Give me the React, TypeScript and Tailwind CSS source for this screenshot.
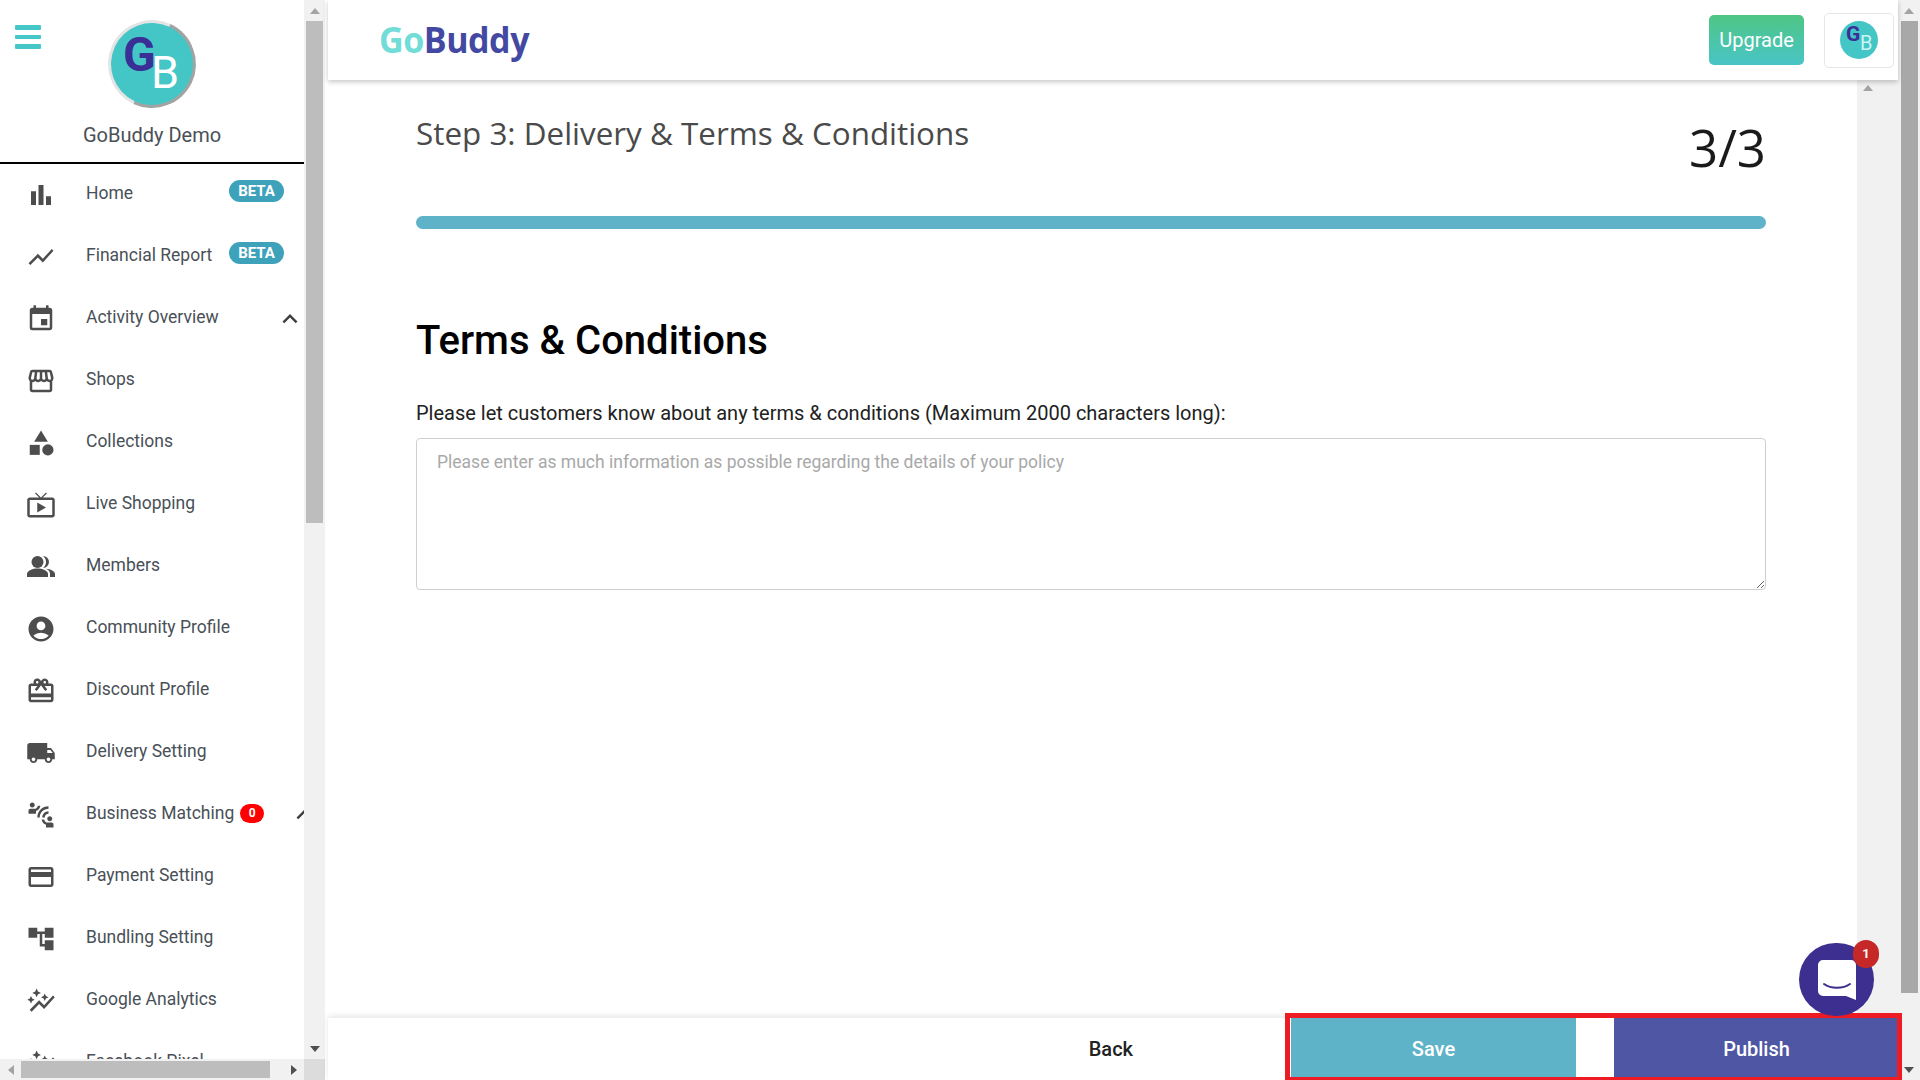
import React from 'react';
import {
  MdBarChart, MdShowChart, MdEvent, MdOutlineStorefront, MdCategory, MdOutlineLiveTv,
  MdAccountCircle, MdOutlineRedeem, MdLocalShipping, MdConnectWithoutContact, MdOutlineCreditCard,
  MdAccountTree, MdAutoGraph, MdExpandLess,
} from 'react-icons/md';

const PeopleIcon = ({ size, className }: { size: number; className?: string }) => (
  <svg viewBox="0 2 30 30" width={size} height={size} className={className} fill="currentColor">
    <circle cx="11.5" cy="12" r="6" />
    <path d="M17 6a6 6 0 0 1 0 12c2-1.600 3-3.600 3-6s-1-4.400-3-6z" />
    <path d="M1 27v-3c0-3.500 6-5.500 10.500-5.500S22 20.500 22 24v3z" />
    <path d="M20 18.700c4.500.4 9 2.300 9 5.300v3h-5v-3.400c0-2.100-1.500-3.800-4-4.900z" />
  </svg>
);

const menu = [
  { label: 'Home', icon: MdBarChart, beta: true },
  { label: 'Financial Report', icon: MdShowChart, beta: true },
  { label: 'Activity Overview', icon: MdEvent, chevron: true },
  { label: 'Shops', icon: MdOutlineStorefront },
  { label: 'Collections', icon: MdCategory },
  { label: 'Live Shopping', icon: MdOutlineLiveTv },
  { label: 'Members', icon: PeopleIcon },
  { label: 'Community Profile', icon: MdAccountCircle },
  { label: 'Discount Profile', icon: MdOutlineRedeem },
  { label: 'Delivery Setting', icon: MdLocalShipping },
  { label: 'Business Matching', icon: MdConnectWithoutContact, count: 0 },
  { label: 'Payment Setting', icon: MdOutlineCreditCard },
  { label: 'Bundling Setting', icon: MdAccountTree },
  { label: 'Google Analytics', icon: MdAutoGraph },
  { label: 'Facebook Pixel', icon: MdAutoGraph },
];

const Arrow = ({ dir, className }: { dir: 'up' | 'down' | 'left' | 'right'; className: string }) => {
  const points = { up: '0,8 5,2 10,8', down: '0,2 5,8 10,2', left: '8,0 2,5 8,10', right: '2,0 8,5 2,10' }[dir];
  return (
    <svg viewBox="0 0 10 10" className={`w-[10px] h-[10px] ${className}`}>
      <polygon points={points} />
    </svg>
  );
};

const Avatar = ({ big }: { big?: boolean }) =>
  big ? (
    <div className="w-[88px] h-[88px] rounded-full border-[3px] border-t-[#e4e4e4] border-l-[#e4e4e4] border-r-[#a3a3a3] border-b-[#a3a3a3] rotate-[-20deg] bg-[#45c6c6] relative overflow-hidden shrink-0">
      <div className="absolute inset-0 rotate-[20deg]">
        <span className="absolute left-[12px] top-[4px] text-[48px] leading-[56px] font-bold text-[#3a2f96]">G</span>
        <span className="absolute left-[40px] top-[23px] text-[45px] leading-[54px] text-white">B</span>
      </div>
    </div>
  ) : (
    <div className="w-[38px] h-[38px] rounded-full bg-[#45c6c6] relative overflow-hidden shrink-0">
      <span className="absolute left-[6px] top-[1px] text-[21px] leading-[24px] font-bold text-[#3a2f96]">G</span>
      <span className="absolute left-[20px] top-[10px] text-[20px] leading-[24px] text-[#c9f4f4]">B</span>
    </div>
  );

const Sidebar = () => (
  <aside className="w-[325px] shrink-0 flex flex-col bg-white">
    <div className="flex flex-1 min-h-0">
      <div className="w-[304px] shrink-0 overflow-hidden">
        <div className="relative h-[164px] border-b-2 border-black flex flex-col items-center pt-[20px]">
          <div className="absolute left-[15px] top-[25px] w-[26px] flex flex-col gap-[5px]">
            <div className="h-[4.5px] rounded-[1px] bg-[#45c7c7]" />
            <div className="h-[4.5px] rounded-[1px] bg-[#45c7c7]" />
            <div className="h-[4.5px] rounded-[1px] bg-[#45c7c7]" />
          </div>
          <Avatar big />
          <div className="mt-[14px] text-[20px] leading-[26px] text-[#495057]">GoBuddy Demo</div>
        </div>
        <nav className="-mt-[2px]">
          {menu.map(item => (
            <div key={item.label} className="h-[62px] flex items-center whitespace-nowrap text-[17.5px] text-[#495057]">
              <div className="w-[86px] pl-[26px] pt-[4px] shrink-0">
                <item.icon size={30} className="text-[#4d4d4d]" />
              </div>
              <span className="shrink-0">{item.label}</span>
              {item.beta && (
                <span className="ml-auto mr-[20px] mb-[4px] w-[55px] h-[22px] shrink-0 rounded-full bg-[#3fa2bb] text-white text-[15px] font-bold flex items-center justify-center">BETA</span>
              )}
              {item.chevron && (
                <MdExpandLess size={30} className="ml-[56px] mt-[4px] shrink-0 text-[#3f3f3f]" />
              )}
              {item.count !== undefined && (
                <>
                  <span className="ml-[6px] w-[24px] h-[19px] shrink-0 rounded-full bg-[#f00] text-white text-[12px] font-bold flex items-center justify-center">{item.count}</span>
                  <MdExpandLess size={30} className="ml-[25px] mt-[4px] shrink-0 text-[#3f3f3f]" />
                </>
              )}
            </div>
          ))}
        </nav>
      </div>
      <div className="w-[21px] shrink-0 bg-[#f1f1f1] flex flex-col items-center">
        <div className="h-[21px] flex items-center justify-center"><Arrow dir="up" className="fill-[#a3a3a3]" /></div>
        <div className="w-[17px] h-[502px] bg-[#bdbdbd]" />
        <div className="mt-auto h-[21px] flex items-center justify-center"><Arrow dir="down" className="fill-[#505050]" /></div>
      </div>
    </div>
    <div className="h-[21px] shrink-0 bg-[#f1f1f1] flex items-center">
      <div className="w-[21px] flex justify-center"><Arrow dir="left" className="fill-[#a3a3a3]" /></div>
      <div className="w-[249px] h-[17px] bg-[#bdbdbd]" />
      <div className="w-[34px] flex justify-end pr-[5px]"><Arrow dir="right" className="fill-[#505050]" /></div>
      <div className="w-[21px] h-full bg-[#dcdcdc]" />
    </div>
  </aside>
);

const Header = () => (
  <header className="relative z-10 h-[80px] shrink-0 bg-white shadow-[0_2px_5px_rgba(0,0,0,0.22)] flex items-center pl-[51px] pr-[4px]">
    <div className="text-[36px] font-bold leading-none tracking-[-0.5px] [font-family:'Open_Sans',sans-serif] scale-x-[0.945] origin-left">
      <span className="text-[#72dcd6]">Go</span>
      <span className="text-[#4349a3]">Buddy</span>
    </div>
    <button className="ml-auto w-[95px] h-[50px] rounded-[5px] bg-gradient-to-b from-[#4fc583] to-[#49c4c6] text-white text-[20px]">Upgrade</button>
    <div className="ml-[20px] w-[70px] h-[55px] rounded-[5px] border border-[#e6e6e6] flex items-center justify-center">
      <Avatar />
    </div>
  </header>
);

const Content = () => (
  <div className="flex-1 min-h-0 flex">
    <div className="flex-1 pl-[88px] pr-[91px]">
      <div className="flex justify-between items-start h-[136px]">
        <h2 className="mt-[29px] text-[31.4px] leading-[48px] text-[#4a4a4a] [font-family:'Open_Sans',sans-serif]">Step 3: Delivery &amp; Terms &amp; Conditions</h2>
        <div className="mt-[33px] text-[51px] leading-[68px] text-[#1a1a1a] [font-family:'Open_Sans',sans-serif]">3/3</div>
      </div>
      <div className="h-[13px] rounded-full bg-[#5fb3c9]" />
      <h1 className="mt-[87px] text-[40px] leading-[50px] font-medium text-black">Terms &amp; Conditions</h1>
      <label className="block mt-[32px] text-[20px] leading-[30px] text-[#212121]">Please let customers know about any terms &amp; conditions (Maximum 2000 characters long):</label>
      <textarea
        readOnly
        placeholder="Please enter as much information as possible regarding the details of your policy"
        className="block mt-[10px] w-full h-[152px] rounded-[4px] border border-[#cfcfcf] px-[20px] py-[10px] text-[17.5px] leading-[26px] placeholder:text-[#a8a8a8] outline-none"
      />
    </div>
    <div className="w-[41px] shrink-0 bg-[#f1f1f1] pl-[5px]">
      <Arrow dir="up" className="ml-[1px] mt-[3px] fill-[#a3a3a3]" />
    </div>
  </div>
);

const Footer = () => (
  <footer className="relative h-[62px] shrink-0 bg-white shadow-[0_-2px_6px_rgba(0,0,0,0.1)] flex items-stretch text-[20px] font-medium">
    <div className="flex-1 flex items-center justify-end text-[#212121] pr-[158px]">Back</div>
    <div className="w-[285px] mb-[3px] pt-[2px] bg-[#5fb3c9] text-white flex items-center justify-center">Save</div>
    <div className="w-[38px]" />
    <div className="w-[283px] mb-[3px] pt-[2px] pl-[2px] bg-[#4f56a4] text-white flex items-center justify-center">Publish</div>
    <div className="w-[1px]" />
  </footer>
);

const App: React.FC = () => (
  <div className="relative h-screen w-screen overflow-hidden flex bg-white font-['Roboto',sans-serif]">
    <Sidebar />
    <main className="flex-1 min-w-0 flex flex-col pl-[3px]">
      <Header />
      <Content />
      <Footer />
    </main>
    <div className="w-[22px] shrink-0 bg-[#f1f1f1] flex flex-col items-center">
      <div className="h-[21px] flex items-center justify-center"><Arrow dir="up" className="fill-[#a3a3a3]" /></div>
      <div className="w-[17px] h-[972px] bg-[#a8a8a8]" />
      <div className="mt-auto h-[21px] flex items-center justify-center"><Arrow dir="down" className="fill-[#505050]" /></div>
    </div>

    {/* annotation box around the actions */}
    <div className="absolute left-[1285px] top-[1013px] w-[617px] h-[67px] border-[5px] border-b-[3px] border-[#ed1c24] pointer-events-none" />

    {/* chat launcher */}
    <div className="absolute left-[1799px] top-[943px] w-[75px] h-[73px] rounded-full bg-[#3d2f8f] flex items-center justify-center">
      <svg viewBox="0 0 40 40" className="w-[40px] h-[40px]">
        <path d="M6 0h28a5 5 0 0 1 5 5v35l-10-4H6a5 5 0 0 1-5-5V5a5 5 0 0 1 5-5z" fill="#fff" />
        <path d="M7 24c7 5 19 5 26 0" fill="none" stroke="#3d2f8f" strokeWidth="2" strokeLinecap="round" />
      </svg>
    </div>
    <div className="absolute left-[1853px] top-[940px] w-[26px] h-[28px] rounded-full bg-[#c62828] text-white text-[13px] font-bold flex items-center justify-center">1</div>
  </div>
);

export default App;
